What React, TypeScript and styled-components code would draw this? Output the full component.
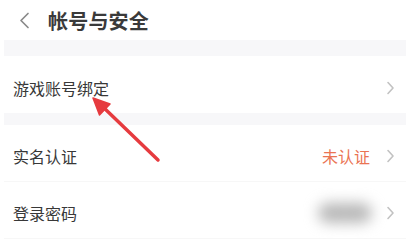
import React from "react";
import styled, { createGlobalStyle } from "styled-components";

const Global = createGlobalStyle`
  html, body { margin: 0; padding: 0; background: #ffffff; }
  body { font-family: "Noto Sans CJK SC", "Noto Sans", sans-serif; }
`;

const Page = styled.div`
  position: relative;
  width: 420px;
  height: 250px;
  overflow: hidden;
  background: #fff;
`;

const Column = styled.div`
  width: 402px;
  margin-left: 4px;
  display: flex;
  flex-direction: column;
`;

const Header = styled.div`
  height: 40px;
  display: flex;
  align-items: center;
  padding-left: 15px;
  gap: 18px;
`;

const Title = styled.div`
  font-size: 20px;
  font-weight: 700;
  color: #3a3a3a;
  line-height: 20px;
  letter-spacing: 0.2px;
  padding-top: 1px;
`;

const Band = styled.div<{ $h: number }>`
  height: ${(p) => p.$h}px;
  background: #f7f7f9;
`;

const Row = styled.div<{ $line?: boolean }>`
  height: 57px;
  box-sizing: border-box;
  padding: 6px 11px 0 9px;
  display: flex;
  align-items: center;
  border-bottom: ${(p) => (p.$line ? "1px solid #f7f7f7" : "none")};
`;

const Label = styled.div`
  flex: 1;
  font-size: 16px;
  color: #383838;
  line-height: 16px;
`;

const Status = styled.div`
  font-size: 16px;
  color: #ea7453;
  line-height: 16px;
  margin-right: 16px;
`;

const Blur = styled.div`
  width: 54px;
  height: 20px;
  border-radius: 10px;
  background: #b8b8b8;
  filter: blur(7px);
  margin-right: 14px;
`;

const Overlay = styled.svg`
  position: absolute;
  left: 0;
  top: 0;
  pointer-events: none;
`;

const Chevron = () => (
  <svg width="9" height="14" viewBox="0 0 9 14">
    <path d="M2 1.5 L7 7 L2 12.5" fill="none" stroke="#c2c2c2" strokeWidth="1.6" strokeLinecap="round" strokeLinejoin="round" />
  </svg>
);

const Back = () => (
  <svg width="11" height="17" viewBox="0 0 11 17">
    <path d="M9 1.5 L2 8.5 L9 15.5" fill="none" stroke="#8a8a8a" strokeWidth="1.7" strokeLinecap="round" strokeLinejoin="round" />
  </svg>
);

export default function App() {
  return (
    <Page>
      <Global />
      <Column>
        <Header>
          <Back />
          <Title>帐号与安全</Title>
        </Header>
        <Band $h={16} />
        <Row>
          <Label>游戏账号绑定</Label>
          <Chevron />
        </Row>
        <Band $h={12} />
        <Row $line>
          <Label>实名认证</Label>
          <Status>未认证</Status>
          <Chevron />
        </Row>
        <Row $line>
          <Label>登录密码</Label>
          <Blur />
          <Chevron />
        </Row>
      </Column>
      <Overlay width="420" height="250" viewBox="0 0 420 250">
        <line x1="158" y1="160" x2="102" y2="106" stroke="#e63b3f" strokeWidth="3.5" strokeLinecap="round" />
        <polygon points="93,98 110,104 99.5,115" fill="#e63b3f" stroke="#e63b3f" strokeWidth="1.5" strokeLinejoin="round" />
      </Overlay>
    </Page>
  );
}
